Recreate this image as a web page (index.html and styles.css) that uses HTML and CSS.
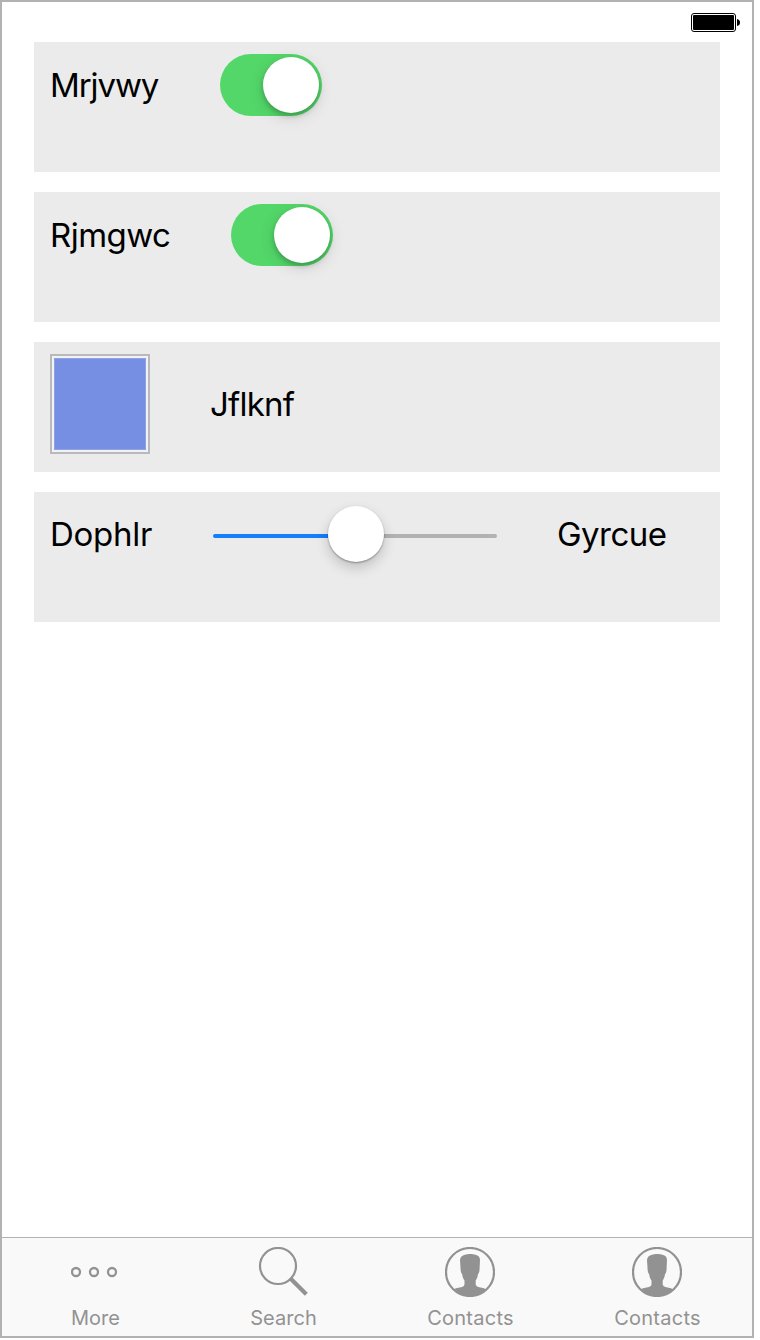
FILE: index.html
```html
<!DOCTYPE html>
<html lang="en">
<head>
<meta charset="utf-8">
<title>Settings</title>
<link rel="stylesheet" href="styles.css">
</head>
<body>
<div class="phone">
  <header class="status-bar">
    <svg class="battery" width="50" height="20" viewBox="0 0 50 20">
      <rect x=".5" y=".5" width="44" height="18" rx="2.5" fill="#fff" stroke="#000"/>
      <rect x="2" y="2" width="41" height="15" rx="1" fill="#000"/>
      <path d="M46 6q3 .5 3 3.500t-3 3.500z" fill="#000"/>
    </svg>
  </header>
  <main class="rows">
    <section class="row">
      <div class="line switch-line">
        <span class="label label-one">Mrjvwy</span>
        <span class="switch"><span class="knob"></span></span>
      </div>
    </section>
    <section class="row">
      <div class="line switch-line">
        <span class="label label-two">Rjmgwc</span>
        <span class="switch"><span class="knob"></span></span>
      </div>
    </section>
    <section class="row">
      <div class="line swatch-line">
        <span class="swatch"></span>
        <span class="label label-three">Jflknf</span>
      </div>
    </section>
    <section class="row">
      <div class="line slider-line">
        <span class="label label-four">Dophlr</span>
        <span class="slider"><span class="track-on"></span><span class="knob"></span><span class="track-off"></span></span>
        <span class="label label-five">Gyrcue</span>
      </div>
    </section>
  </main>
  <nav class="tabs">
    <div class="tab">
      <svg class="icon" width="50" height="50" viewBox="0 0 50 50" fill="none" stroke="#929292" stroke-width="2.3">
        <circle cx="5" cy="25" r="4"/><circle cx="23" cy="25" r="4"/><circle cx="41" cy="25" r="4"/>
      </svg>
      <span class="tab-label more">More</span>
    </div>
    <div class="tab">
      <svg class="icon" width="50" height="50" viewBox="0 0 50 50" fill="none" stroke="#929292">
        <circle cx="20" cy="19" r="18" stroke-width="2.2"/>
        <path d="M32 31L48.300 47.300" stroke-width="4.2"/>
      </svg>
      <span class="tab-label search">Search</span>
    </div>
    <div class="tab">
      <svg class="icon" width="50" height="50" viewBox="0 0 50 50">
        <circle cx="25" cy="25" r="24" fill="none" stroke="#929292" stroke-width="2.2"/>
        <path d="M8.500 42.500L11 41.300L17 39.900Q19.300 39.500 19.500 37.500V33.500C18.300 32 17.500 30 17.200 27.300C16 26 15.600 24 15.500 21L15 13C15.300 10 17 8.700 20 7.800C22.500 6.700 28 6.700 30.500 7.800C33.500 8.700 34.900 10 35 13L34.600 21C34.600 24 34.100 26.300 33 27.300C32.600 30 31.800 32 30.700 33.500V37.500Q31 39.500 33.300 39.900L39 41.300L41.500 42.500A24 24 0 0 1 8.500 42.500Z" fill="#929292"/>
      </svg>
      <span class="tab-label contacts">Contacts</span>
    </div>
    <div class="tab">
      <svg class="icon" width="50" height="50" viewBox="0 0 50 50">
        <circle cx="25" cy="25" r="24" fill="none" stroke="#929292" stroke-width="2.2"/>
        <path d="M8.500 42.500L11 41.300L17 39.900Q19.300 39.500 19.500 37.500V33.500C18.300 32 17.500 30 17.200 27.300C16 26 15.600 24 15.500 21L15 13C15.300 10 17 8.700 20 7.800C22.500 6.700 28 6.700 30.500 7.800C33.500 8.700 34.900 10 35 13L34.600 21C34.600 24 34.100 26.300 33 27.300C32.600 30 31.800 32 30.700 33.500V37.500Q31 39.500 33.300 39.900L39 41.300L41.500 42.500A24 24 0 0 1 8.500 42.500Z" fill="#929292"/>
      </svg>
      <span class="tab-label contacts">Contacts</span>
    </div>
  </nav>
</div>
</body>
</html>
```
FILE: styles.css
```css
* { box-sizing: border-box; }
body { margin: 0; background: #fff; font-family: Inter, "Liberation Sans", sans-serif; }
.phone { width: 754px; height: 1338px; border: 2px solid #b2b2b2; background: #fff; display: flex; flex-direction: column; }
.status-bar { height: 40px; padding: 11px 11px 0 0; display: flex; justify-content: flex-end; align-items: flex-start; }
.battery { display: block; }
.rows { flex: 1; padding: 0 32px; display: flex; flex-direction: column; gap: 20px; }
.row { height: 130px; padding: 12px 16px; background: #ebebeb; }
.line { display: flex; align-items: center; gap: 60px; }
.switch-line { height: 62px; }
.swatch-line { height: 100px; }
.slider-line { height: 60px; }
.label { font-size: 33px; line-height: 40px; white-space: nowrap; color: #000; }
.label-one { width: 110px; letter-spacing: -1.1px; }
.label-two { width: 121px; letter-spacing: -.55px; }
.label-three { width: 86px; letter-spacing: -.8px; }
.label-four { width: 103px; letter-spacing: -.25px; }
.label-five { width: 112px; letter-spacing: -.55px; }
.knob { flex: none; width: 56px; height: 56px; border-radius: 50%; background: #fff; box-shadow: 0 4px 16px rgba(0,0,0,.14), 0 3px 5px rgba(0,0,0,.2); }
.switch { width: 102px; height: 62px; padding: 3px; border-radius: 31px; background: #53d769; display: flex; justify-content: flex-end; }
.swatch { width: 100px; height: 100px; border: 2px solid #b9b9b9; padding: 2px; background: #f1f2f6; display: flex; }
.swatch::before { content: ""; flex: 1; background: #768fe2; border: 1px solid #8da2e6; }
.slider { width: 284px; height: 60px; display: flex; align-items: center; }
.slider .knob { z-index: 1; box-shadow: 0 6px 13px rgba(0,0,0,.18), 0 1px 2px rgba(0,0,0,.35); }
.track-on, .track-off { flex: 1; height: 4px; margin-top: 4px; background: #147efb; border-radius: 2px 0 0 2px; }
.track-on { flex: 0 0 115px; }
.track-off { background: #b2b2b2; border-radius: 0 2px 2px 0; }
.tabs { height: 99px; border-top: 1px solid #b2b2b2; background: #f9f9f9; padding-right: 1px; display: grid; grid-template-columns: repeat(4, 187px); }
.tab { padding-top: 9px; display: flex; flex-direction: column; align-items: center; }
.icon { display: block; }
.tab-label { margin-top: 9px; padding-left: 2px; font-size: 20px; line-height: 24px; letter-spacing: .25px; color: #929292; }
.more { padding-left: 0; letter-spacing: 0; }
.search { letter-spacing: .05px; }
```
